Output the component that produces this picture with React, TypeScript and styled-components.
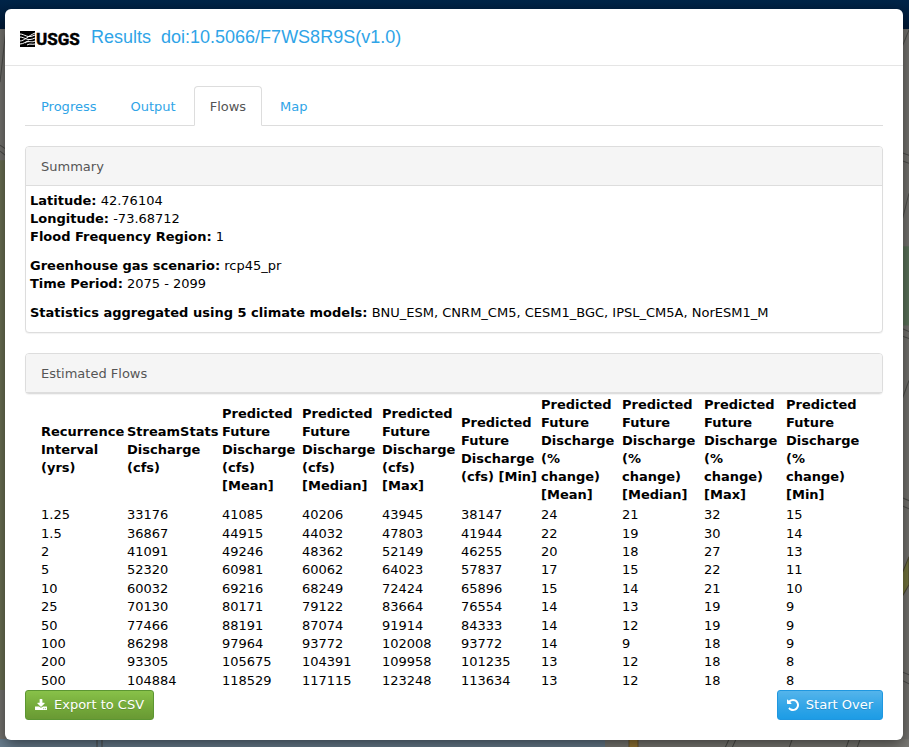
import React from "react";
import styled, { createGlobalStyle } from "styled-components";

const GlobalStyle = createGlobalStyle`
  * { box-sizing: border-box; }
  html, body { margin: 0; }
  body {
    font-family: Verdana, "DejaVu Sans", sans-serif;
    font-size: 13px;
    line-height: 18px;
    color: #000;
    background: #5f5f5b;
  }
`;

const Page = styled.div`
  position: relative;
  display: flex;
  min-height: 100vh;
  padding: 9px 6px 8px 5px;
  overflow: hidden;
`;

const MapBackdrop = styled.svg`
  position: absolute;
  inset: 0;
  width: 100%;
  height: 100%;
`;

const Modal = styled.main`
  position: relative;
  flex: 1;
  min-width: 0;
  background: #fff;
  border-radius: 6px;
  box-shadow: 0 5px 15px rgba(0, 0, 0, 0.5);
`;

const ModalHeader = styled.header`
  display: flex;
  align-items: center;
  gap: 10px;
  height: 57px;
  padding: 0 15px;
  border-bottom: 1px solid #e5e5e5;
`;

const Logo = styled.svg`
  display: block;
  flex: none;
  margin-top: 4px;
`;

const Title = styled.h1`
  display: flex;
  gap: 10px;
  margin: 0;
  font: 400 18px/20px "Liberation Sans", Arial, sans-serif;
  color: #2fa4e7;
`;

const ModalBody = styled.div`
  padding: 20px;
`;

const Tabs = styled.nav`
  display: flex;
  gap: 2px;
  border-bottom: 1px solid #ddd;
`;

const Tab = styled.a<{ $active?: boolean }>`
  margin-bottom: -1px;
  padding: 11px 15px 9px;
  border: 1px solid;
  border-color: ${(p) => (p.$active ? "#ddd #ddd #fff" : "transparent")};
  border-radius: 4px 4px 0 0;
  background: ${(p) => (p.$active ? "#fff" : "transparent")};
  color: ${(p) => (p.$active ? "#555" : "#2fa4e7")};
  text-decoration: none;
`;

const Panel = styled.section`
  margin-top: 20px;
  border: 1px solid #ddd;
  border-radius: 4px;
  background: #fff;
  box-shadow: 0 1px 1px rgba(0, 0, 0, 0.05);
`;

const PanelHeading = styled.h2`
  margin: 0;
  padding: 11px 15px 9px;
  border-bottom: 1px solid #ddd;
  border-radius: 3px 3px 0 0;
  background: #f5f5f5;
  color: #555;
  font-size: 13px;
  font-weight: 400;
`;

const SummaryBody = styled.div`
  padding: 6px 4px 10px;
`;

const Facts = styled.p`
  margin: 0 0 11px;

  &:last-child { margin-bottom: 0; }
`;

const Fact = styled.span`
  display: block;
`;

const FlowTable = styled.table`
  width: calc(100% - 29px);
  height: 296px;
  margin-left: 16px;
  border-collapse: collapse;
  table-layout: fixed;
`;

const Column = styled.col<{ $width: number }>`
  width: ${(p) => p.$width}px;
`;

const HeadCell = styled.th`
  height: 112px;
  padding: 0;
  text-align: left;
  vertical-align: middle;
`;

const Line = styled.span`
  display: block;
  white-space: nowrap;
`;

const Cell = styled.td`
  padding: 0;
`;

const Actions = styled.footer`
  display: flex;
  justify-content: space-between;
`;

const Button = styled.button<{ $tone: "green" | "blue" }>`
  display: flex;
  align-items: center;
  gap: 7px;
  height: 30px;
  padding: 0 9px;
  border: 1px solid ${(p) => (p.$tone === "green" ? "#5c9632" : "#1f97e0")};
  border-radius: 3px;
  background: ${(p) =>
    p.$tone === "green"
      ? "linear-gradient(#88c149, #73a839 60%, #699934)"
      : "linear-gradient(#54b4eb, #2fa4e7 60%, #1d9ce5)"};
  color: #fff;
  font: inherit;
  text-shadow: 0 1px 0 rgba(0, 0, 0, 0.15);
`;

const facts = [
  [["Latitude:", "42.76104"], ["Longitude:", "-73.68712"], ["Flood Frequency Region:", "1"]],
  [["Greenhouse gas scenario:", "rcp45_pr"], ["Time Period:", "2075 - 2099"]],
  [["Statistics aggregated using 5 climate models:", "BNU_ESM, CNRM_CM5, CESM1_BGC, IPSL_CM5A, NorESM1_M"]],
];

const predicted = ["Predicted", "Future", "Discharge"];
const columns = [
  { width: 86, lines: ["Recurrence", "Interval", "(yrs)"] },
  { width: 95, lines: ["StreamStats", "Discharge", "(cfs)"] },
  { width: 80, lines: [...predicted, "(cfs)", "[Mean]"] },
  { width: 80, lines: [...predicted, "(cfs)", "[Median]"] },
  { width: 79, lines: [...predicted, "(cfs)", "[Max]"] },
  { width: 80, lines: [...predicted, "(cfs) [Min]"] },
  { width: 81, lines: [...predicted, "(%", "change)", "[Mean]"] },
  { width: 82, lines: [...predicted, "(%", "change)", "[Median]"] },
  { width: 82, lines: [...predicted, "(%", "change)", "[Max]"] },
  { width: 84, lines: [...predicted, "(%", "change)", "[Min]"] },
];

const rows = [
  ["1.25", 33176, 41085, 40206, 43945, 38147, 24, 21, 32, 15],
  ["1.5", 36867, 44915, 44032, 47803, 41944, 22, 19, 30, 14],
  ["2", 41091, 49246, 48362, 52149, 46255, 20, 18, 27, 13],
  ["5", 52320, 60981, 60062, 64023, 57837, 17, 15, 22, 11],
  ["10", 60032, 69216, 68249, 72424, 65896, 15, 14, 21, 10],
  ["25", 70130, 80171, 79122, 83664, 76554, 14, 13, 19, 9],
  ["50", 77466, 88191, 87074, 91914, 84333, 14, 12, 19, 9],
  ["100", 86298, 97964, 93772, 102008, 93772, 14, 9, 18, 9],
  ["200", 93305, 105675, 104391, 109958, 101235, 13, 12, 18, 8],
  ["500", 104884, 118529, 117115, 123248, 113634, 13, 12, 18, 8],
];

const Backdrop = () => (
  <MapBackdrop viewBox="0 0 909 747" preserveAspectRatio="none" aria-hidden="true">
    <defs>
      <linearGradient id="bar" x1="0" y1="0" x2="0" y2="1">
        <stop offset="0" stopColor="#002549" />
        <stop offset="1" stopColor="#001a38" />
      </linearGradient>
    </defs>
    <rect width="909" height="747" fill="#757470" />
    <rect y="160" width="20" height="529" fill="#6c7154" />
    <path d="M0 738H605V747H0Z" fill="#6a7f90" />
    <path d="M605 738H909V747H605Z" fill="#7d7c77" />
    <rect x="895" y="246" width="14" height="79" fill="#5c745b" />
    <path d="M895 590L909 556V584L895 608Z" fill="#77783f" stroke="#4b4731" />
    <path d="M629 747V736H638V747Z" fill="#9a7a35" stroke="#6a5630" />
    <g stroke="#4e4e4b" fill="none">
      <path d="M0 82L6 29M0 145L9 151M0 151L9 158M895 64L909 30M895 150L909 155M895 158L909 163M895 248L909 193M895 325L909 331M895 333L909 338M895 418L909 380M895 494L909 500M895 502L909 508M895 668L909 674M895 676L909 683" />
      <path d="M97 747V736M102 747V736M725 747L730 736M732 747L737 736M789 747L793 736M846 747L850 736M857 747L861 736" />
    </g>
    <rect width="909" height="29" fill="url(#bar)" />
  </MapBackdrop>
);

const UsgsLogo = () => (
  <Logo width="61" height="18" viewBox="0 0 61 18" role="img" aria-label="USGS">
    <rect y="1" width="15" height="16" fill="#000" />
    <g fill="none" stroke="#fff">
      <path d="M0 4C5 4 7 9 15 5M0 7C5 7 7 12 15 8M5 13C9 10 12 13 15 11" />
      <path d="M0 11C4 11 8 6 15 3M0 14C4 14 6 11 9 11M7 15C10 13 12 15 15 14" />
    </g>
    <text
      x="16"
      y="15"
      fontFamily="Roboto, Arial, sans-serif"
      fontSize="17"
      fontWeight="700"
      stroke="#000"
      strokeWidth="0.5"
    >
      USGS
    </text>
  </Logo>
);

const DownloadIcon = () => (
  <svg width="12" height="12" viewBox="0 0 1664 1664" fill="currentColor" aria-hidden="true">
    <path d="M1280 1344q0-26-19-45t-45-19-45 19-19 45 19 45 45 19 45-19 19-45zm256 0q0-26-19-45t-45-19-45 19-19 45 19 45 45 19 45-19 19-45zm128-224v320q0 40-28 68t-68 28h-1472q-40 0-68-28t-28-68v-320q0-40 28-68t68-28h465l135 136q58 56 136 56t136-56l136-136h464q40 0 68 28t28 68zm-325-569q17 41-14 70l-448 448q-18 19-45 19t-45-19l-448-448q-31-29-14-70 17-39 59-39h256v-448q0-26 19-45t45-19h256q26 0 45 19t19 45v448h256q42 0 59 39z" />
  </svg>
);

const UndoIcon = () => (
  <svg width="12" height="12" viewBox="0 128 1536 1536" fill="currentColor" aria-hidden="true">
    <path d="M1536 896q0 156-61 298t-164 245-245 164-298 61q-172 0-327-72.500t-264-204.500q-7-10-6.500-22.500t8.500-20.500l137-138q10-9 25-9 16 2 23 12 73 95 179 147t225 52q104 0 198.500-40.500t163.500-109.500 109.500-163.500 40.500-198.500-40.500-198.500-109.500-163.500-163.500-109.500-198.500-40.500q-98 0-188 35.500t-160 101.500l137 138q31 30 14 69-17 40-59 40h-448q-26 0-45-19t-19-45v-448q0-42 40-59 39-17 69 14l130 129q107-101 244.500-156.500t284.500-55.500q156 0 298 61t245 164 164 245 61 298z" />
  </svg>
);

export default function App() {
  return (
    <>
      <GlobalStyle />
      <Page>
        <Backdrop />
        <Modal>
          <ModalHeader>
            <UsgsLogo />
            <Title>
              <span>Results</span>
              <span>doi:10.5066/F7WS8R9S(v1.0)</span>
            </Title>
          </ModalHeader>
          <ModalBody>
            <Tabs>
              <Tab href="#progress">Progress</Tab>
              <Tab href="#output">Output</Tab>
              <Tab href="#flows" $active aria-current="page">Flows</Tab>
              <Tab href="#map">Map</Tab>
            </Tabs>
            <Panel>
              <PanelHeading>Summary</PanelHeading>
              <SummaryBody>
                {facts.map((group) => (
                  <Facts key={group[0][0]}>
                    {group.map(([label, value]) => (
                      <Fact key={label}><strong>{label}</strong> {value}</Fact>
                    ))}
                  </Facts>
                ))}
              </SummaryBody>
            </Panel>
            <Panel>
              <PanelHeading>Estimated Flows</PanelHeading>
            </Panel>
            <FlowTable>
              <colgroup>
                {columns.map((c, i) => <Column key={i} $width={c.width} />)}
              </colgroup>
              <thead>
                <tr>
                  {columns.map((c, i) => (
                    <HeadCell key={i} scope="col">
                      {c.lines.map((line) => <Line key={line}>{line}</Line>)}
                    </HeadCell>
                  ))}
                </tr>
              </thead>
              <tbody>
                {rows.map((row) => (
                  <tr key={row[0]}>
                    {row.map((value, i) => <Cell key={i}>{value}</Cell>)}
                  </tr>
                ))}
              </tbody>
            </FlowTable>
            <Actions>
              <Button type="button" $tone="green"><DownloadIcon />Export to CSV</Button>
              <Button type="button" $tone="blue"><UndoIcon />Start Over</Button>
            </Actions>
          </ModalBody>
        </Modal>
      </Page>
    </>
  );
}
